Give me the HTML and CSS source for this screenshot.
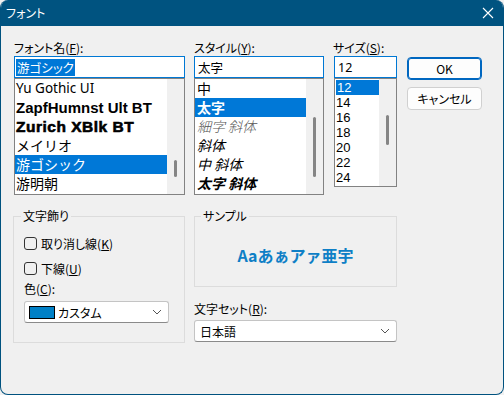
FILE: index.html
```html
<!DOCTYPE html>
<html lang="ja">
<head>
<meta charset="utf-8">
<title>フォント</title>
<link rel="stylesheet" href="styles.css">
</head>
<body>
<div class="window">
  <div class="titlebar">
    <span class="title">フォント</span>
    <svg class="close" width="12" height="12" viewBox="0 0 12 12"><path d="M1 1 L11 11 M11 1 L1 11" stroke="#fff" stroke-width="1.1" fill="none"/></svg>
  </div>
  <div class="top">
    <div class="col col-font">
      <div class="lbl">フォント名(<u>F</u>):</div>
      <div class="edit"><span class="sel">游ゴシック</span></div>
      <div class="list list-font">
        <ul class="items">
          <li class="f-yu">Yu Gothic UI</li>
          <li class="f-zapf">ZapfHumnst Ult BT</li>
          <li class="f-zurich">Zurich XBlk BT</li>
          <li class="f-cjk">メイリオ</li>
          <li class="f-cjk on">游ゴシック</li>
          <li class="f-cjk">游明朝</li>
        </ul>
        <div class="sb"><div class="thumb thumb-font"></div></div>
      </div>
    </div>
    <div class="col col-style">
      <div class="lbl">スタイル(<u>Y</u>):</div>
      <div class="edit"><span class="val">太字</span></div>
      <div class="list list-style">
        <ul class="items">
          <li>中</li>
          <li class="on bold">太字</li>
          <li class="light it">細字 斜体</li>
          <li class="it">斜体</li>
          <li class="it">中 斜体</li>
          <li class="it bold">太字 斜体</li>
        </ul>
        <div class="sb"><div class="thumb thumb-style"></div></div>
      </div>
    </div>
    <div class="col col-size">
      <div class="lbl">サイズ(<u>S</u>):</div>
      <div class="edit"><span class="val num">12</span></div>
      <div class="list list-size">
        <ul class="items">
          <li class="on">12</li>
          <li>14</li>
          <li>16</li>
          <li>18</li>
          <li>20</li>
          <li>22</li>
          <li>24</li>
        </ul>
        <div class="sb"><div class="thumb thumb-size"></div></div>
      </div>
    </div>
    <div class="buttons">
      <button class="btn ok">OK</button>
      <button class="btn">キャンセル</button>
    </div>
  </div>
  <div class="bottom">
    <fieldset class="group deco">
      <legend>文字飾り</legend>
      <div class="check first"><span class="cb"></span><span>取り消し線(<u>K</u>)</span></div>
      <div class="check"><span class="cb"></span><span>下線(<u>U</u>)</span></div>
      <div class="lbl color-lbl">色(<u>C</u>):</div>
      <div class="combo">
        <span class="swatch"></span><span class="combo-text">カスタム</span>
        <svg class="chev" width="10" height="6" viewBox="0 0 10 6"><path d="M1 1 L5 5 L9 1" stroke="#555" stroke-width="1" fill="none"/></svg>
      </div>
    </fieldset>
    <div class="right">
      <fieldset class="group sample">
        <legend>サンプル</legend>
        <div class="sample-text">Aaあぁアァ亜宇</div>
      </fieldset>
      <div class="lbl charset-lbl">文字セット(<u>R</u>):</div>
      <div class="combo">
        <span class="combo-text plain">日本語</span>
        <svg class="chev" width="10" height="6" viewBox="0 0 10 6"><path d="M1 1 L5 5 L9 1" stroke="#555" stroke-width="1" fill="none"/></svg>
      </div>
    </div>
  </div>
</div>
</body>
</html>
```
FILE: styles.css
```css
html, body {
  margin: 0;
  padding: 0;
  background: #f0f0f0;
}
body {
  font-family: "Noto Sans CJK JP", "Noto Sans", sans-serif;
  font-size: 12px;
  font-feature-settings: "palt";
  color: #000;
}
.window {
  width: 504px;
  height: 395px;
  box-sizing: border-box;
  border: 1px solid #00527f;
  border-top: none;
  border-radius: 8px;
  overflow: hidden;
  background: #f0f0f0;
}
.titlebar {
  height: 26px;
  margin: 0 -1px;
  background: #005380;
  display: flex;
  align-items: center;
  justify-content: space-between;
  padding: 0 10px 0 6px;
  color: #fff;
}
.title {
  font-size: 12px;
  line-height: 26px;
}
.close {
  display: block;
}
.top {
  display: flex;
  padding: 13px 0 0 13px;
}
.col {
  display: flex;
  flex-direction: column;
}
.col-font { width: 171px; }
.col-style { width: 130px; margin-left: 9px; }
.col-size { width: 63px; margin-left: 10px; }
.lbl {
  line-height: 17px;
  height: 17px;
  white-space: nowrap;
}
.col-size .lbl { margin-left: -1px; }
.edit {
  height: 22px;
  box-sizing: border-box;
  border: 1px solid #0078d4;
  background: #fff;
  padding: 0 2px 0 1px;
  display: flex;
  align-items: center;
  white-space: nowrap;
}
.sel {
  background: #0078d7;
  color: #fff;
  line-height: 17px;
  font-size: 12.5px;
  padding: 0 1px;
}
.val {
  padding-left: 2px;
  font-size: 12.5px;
}
.num {
  font-family: "Noto Sans", sans-serif;
}
.list {
  box-sizing: border-box;
  border: 1px solid #828282;
  background: #fff;
  display: flex;
  height: 117px;
}
.list-size {
  height: 109px;
}
.items {
  flex: 1;
  list-style: none;
  margin: 0;
  padding: 0;
  overflow: hidden;
}
.items li {
  height: 19px;
  line-height: 19px;
  white-space: nowrap;
  font-size: 14px;
  padding-left: 1px;
}
.items li.on {
  background: #0078d7;
  color: #fff;
}
.f-yu {
  font-family: "Noto Sans", sans-serif;
  font-size: 13.5px !important;
}
.f-zapf {
  font-family: "Liberation Sans", sans-serif;
  font-weight: 700;
  font-size: 15px !important;
}
.f-zurich {
  font-family: "Liberation Sans", sans-serif;
  font-weight: 900;
  font-size: 15.5px !important;
  letter-spacing: 0.5px;
  -webkit-text-stroke: 0.6px #000;
}
.f-cjk {
  font-feature-settings: normal;
}
.list-style .items li {
  padding-left: 2px;
}
.bold { font-weight: 700; }
.it { font-style: italic; }
.light { font-weight: 300; color: #555; }
.list-size .items {
  padding-top: 1px;
}
.list-size .items li {
  height: 15px;
  line-height: 15px;
  font-size: 13px;
  font-family: "Liberation Sans", sans-serif;
}
.list-size .items li.on {
  margin-left: 1px;
}
.sb {
  width: 17px;
  background: #f0f0f0;
  display: flex;
  justify-content: center;
}
.thumb {
  width: 3px;
  border-radius: 2px;
  background: #858585;
}
.thumb-font { margin-top: 81px; height: 17px; }
.thumb-style { margin-top: 38px; height: 60px; }
.thumb-size { margin-top: 36px; height: 30px; }
.buttons {
  display: flex;
  flex-direction: column;
  gap: 7px;
  margin-left: 10px;
  padding-top: 18px;
}
.btn {
  width: 75px;
  height: 23px;
  box-sizing: border-box;
  border: 1px solid #d0d0d0;
  border-radius: 4px;
  background: #fdfdfd;
  font-family: inherit;
  font-size: 12px;
  font-feature-settings: "palt";
  color: #000;
  padding: 0;
}
.btn.ok {
  border-color: #0067c0;
  box-shadow: inset 0 0 0 1px #0067c0;
}
.bottom {
  display: flex;
  gap: 9px;
  padding: 13px 0 0 12px;
}
.group {
  margin: 0;
  border: 1px solid #dcdcdc;
  box-sizing: border-box;
  min-width: 0;
}
.group legend {
  padding: 0 2px;
  margin-left: -3px;
  line-height: 16px;
}
.deco {
  width: 172px;
  padding: 0 15px 19px 10px;
}
.check {
  display: flex;
  align-items: center;
  height: 20px;
  gap: 4px;
  white-space: nowrap;
}
.check.first {
  margin-top: 9px;
}
.check + .check {
  margin-top: 5px;
}
.cb {
  width: 13px;
  height: 13px;
  box-sizing: border-box;
  border: 1px solid #333;
  border-radius: 3px;
  flex: none;
}
.color-lbl {
  margin-top: 3px;
  line-height: 16px;
  height: 16px;
}
.combo {
  height: 22px;
  box-sizing: border-box;
  border: 1px solid #c4c4c4;
  border-bottom-color: #8a8a8a;
  border-radius: 3px;
  background: #fff;
  display: flex;
  align-items: center;
  padding: 0 6px 0 4px;
  margin-top: 4px;
  white-space: nowrap;
}
.swatch {
  width: 26px;
  height: 13px;
  box-sizing: border-box;
  background: #0080c6;
  border: 1px solid #000;
  flex: none;
}
.combo-text {
  flex: 1;
  margin-left: 3px;
}
.combo-text.plain {
  margin-left: 1px;
}
.chev {
  display: block;
  flex: none;
}
.right {
  width: 203px;
  display: flex;
  flex-direction: column;
}
.sample {
  padding: 0;
}
.sample legend {
  margin-left: 6px;
}
.sample-text {
  height: 62px;
  display: flex;
  align-items: center;
  justify-content: center;
  color: #0e7fc6;
  font-size: 16px;
  font-weight: 700;
  font-feature-settings: normal;
}
.charset-lbl {
  margin-top: 14px;
  line-height: 16px;
  height: 16px;
}
.right .combo {
  margin-top: 3px;
}
```
